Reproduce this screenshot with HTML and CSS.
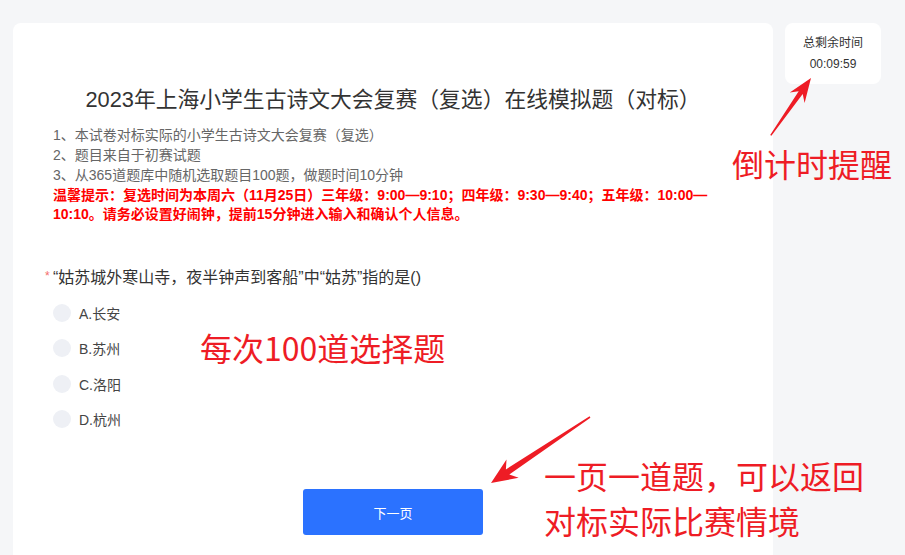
FILE: index.html
```html
<!DOCTYPE html>
<html lang="zh-CN">
<head>
    <meta charset="UTF-8">
    <title>2023年上海小学生古诗文大会复赛（复选）在线模拟题</title>
    <link rel="stylesheet" href="styles.css">
</head>
<body>
    <div class="page">
        <main class="paper">
            <h1 class="paper-title">2023年上海小学生古诗文大会复赛（复选）在线模拟题（对标）</h1>
            <div class="intro">
                <p>1、本试卷对标实际的小学生古诗文大会复赛（复选）</p>
                <p>2、题目来自于初赛试题</p>
                <p>3、从365道题库中随机选取题目100题，做题时间10分钟</p>
                <p class="notice">温馨提示：复选时间为本周六（11月25日）三年级：9:00—9:10；四年级：9:30—9:40；五年级：10:00—10:10。请务必设置好闹钟，提前15分钟进入输入和确认个人信息。</p>
            </div>

            <div class="question">
                <div class="question-title"><span class="required">*</span>“姑苏城外寒山寺，夜半钟声到客船”中“姑苏”指的是()</div>
                <label class="option"><span class="radio"></span>A.长安</label>
                <label class="option"><span class="radio"></span>B.苏州</label>
                <label class="option"><span class="radio"></span>C.洛阳</label>
                <label class="option"><span class="radio"></span>D.杭州</label>
            </div>

            <div class="actions">
                <button class="next-button">下一页</button>
            </div>
        </main>
        <aside class="timer">
            <div>总剩余时间</div>
            <div>00:09:59</div>
        </aside>
    </div>

    <!-- annotations drawn over the screenshot -->
    <svg class="arrows" width="905" height="555" viewBox="0 0 905 555" xmlns="http://www.w3.org/2000/svg">
        <polygon fill="#ee1c25" points="811,78 804.6,102.9 802.7,94.1 771.4,135.7 770.2,134.9 798.7,91.3 789.8,92.5"/>
        <polygon fill="#ee1c25" points="491,483 518.7,477.8 509.3,474.4 590.4,417.7 589.6,416.3 505.9,469.4 506.5,459.4"/>
    </svg>
    <div class="note note-timer">倒计时提醒</div>
    <div class="note note-count">每次100道选择题</div>
    <div class="note note-page">一页一道题，可以返回<br>对标实际比赛情境</div>
</body>
</html>
```

FILE: styles.css
```css
body {
    margin: 0;
    background-color: #f5f6f8;
    font-family: "Liberation Sans", "Noto Sans CJK SC", sans-serif;
    color: #333;
    height: 555px;
    overflow: hidden;
}
.page {
    display: flex;
    align-items: flex-start;
    gap: 12px;
    padding: 23px 0 0 13px;
}
.paper {
    width: 680px;
    min-height: 560px;
    background-color: white;
    border-radius: 8px;
    padding: 62px 40px 0 40px;
}
.paper-title {
    margin: 0;
    font-size: 21.8px;
    font-weight: normal;
    line-height: 30px;
    text-align: center;
    color: #333;
}
.intro {
    margin-top: 10px;
    font-size: 14px;
    line-height: 20px;
    color: #666;
}
.intro p {
    margin: 0;
}
.intro .notice {
    color: #ff0000;
    font-weight: bold;
    line-height: 19px;
    margin-top: 1px;
}
.question {
    margin-top: 44px;
}
.question-title {
    position: relative;
    font-size: 16px;
    line-height: 20px;
    color: #333;
}
.required {
    position: absolute;
    left: -8px;
    top: -2px;
    color: #f56c6c;
    font-size: 12px;
}
.option {
    display: flex;
    align-items: center;
    height: 35.5px;
    font-size: 14px;
    color: #444;
}
.option:first-of-type {
    margin-top: 7px;
}
.radio {
    width: 18px;
    height: 18px;
    border-radius: 50%;
    background-color: #eef0f5;
    margin-right: 8px;
}
.actions {
    display: flex;
    justify-content: center;
    margin-top: 52px;
}
.next-button {
    width: 180px;
    height: 46px;
    border: none;
    border-radius: 3px;
    background-color: #2b72ff;
    color: white;
    font-family: inherit;
    font-size: 13px;
    cursor: pointer;
}
.timer {
    width: 96px;
    height: 61px;
    background-color: white;
    border-radius: 8px;
    display: flex;
    flex-direction: column;
    align-items: center;
    justify-content: center;
    gap: 6px;
    font-size: 12px;
    line-height: 15px;
    color: #333;
}
.arrows {
    position: absolute;
    left: 0;
    top: 0;
}
.note {
    position: absolute;
    font-family: "Noto Sans CJK SC", sans-serif;
    font-size: 32px;
    line-height: 45px;
    color: #ee1c25;
    white-space: nowrap;
}
.note-timer {
    left: 732px;
    top: 141px;
}
.note-count {
    left: 200px;
    top: 325px;
}
.note-page {
    left: 544px;
    top: 453px;
}
```
